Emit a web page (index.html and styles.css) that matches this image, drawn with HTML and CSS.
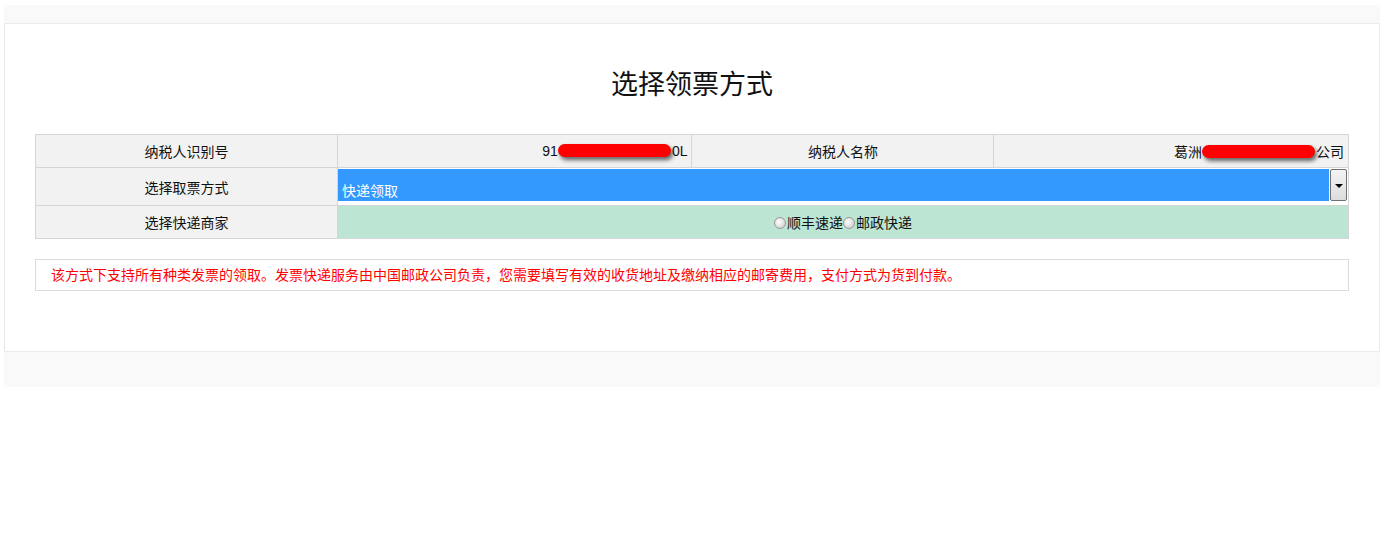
FILE: index.html
```html
<!DOCTYPE html>
<html>
<head>
	<meta charset="UTF-8">
	<title>选择领票方式</title>
	<link rel="stylesheet" href="styles.css">
</head>
<body>
	<div class="wrap">
		<div class="panel">
			<h2 class="title">选择领票方式</h2>
			<table class="info">
				<colgroup>
					<col class="c-lab"><col class="c-val"><col class="c-lab"><col class="c-val">
				</colgroup>
				<tr class="r1">
					<td class="lab">纳税人识别号</td>
					<td class="val">91<span class="mask"></span>0L</td>
					<td class="lab">纳税人名称</td>
					<td class="val">葛洲<span class="mask"></span>公司</td>
				</tr>
				<tr class="r2">
					<td class="lab">选择取票方式</td>
					<td colspan="3" class="selcell">
						<div class="sel">
							<div class="selval">快递领取</div>
							<div class="selbtn"><i></i></div>
						</div>
					</td>
				</tr>
				<tr class="r3">
					<td class="lab">选择快递商家</td>
					<td colspan="3" class="radios">
						<label><input type="radio" name="kd">顺丰速递</label><label><input type="radio" name="kd">邮政快递</label>
					</td>
				</tr>
			</table>
			<div class="notice">该方式下支持所有种类发票的领取。发票快递服务由中国邮政公司负责，您需要填写有效的收货地址及缴纳相应的邮寄费用，支付方式为货到付款。</div>
		</div>
	</div>
</body>
</html>
```

FILE: styles.css
```css
body {margin: 0;background: #fff;font-family: "Liberation Sans", "Noto Sans CJK SC", sans-serif;font-size: 14px;color: #111;}
.wrap {margin: 5px 12px 0 4px;background: #f9f9f9;padding: 18px 0 35px;}
.panel {background: #fff;border: 1px solid #ebebeb;border-left: 1px solid #e6e6e6;padding: 42px 30px 60px;}
.title {margin: 0 0 30px;text-align: center;font-weight: normal;font-size: 27px;line-height: 38px;color: #111;}
.info {width: 100%;border-collapse: collapse;table-layout: fixed;}
.info .c-lab {width: 23%;}
.info .c-val {width: 27%;}
.info td {border: 1px solid #d6d6d6;padding: 0 4px;}
.info .r1 td {height: 32px;}
.info .r2 td {height: 37px;}
.info .r3 td {height: 32px;}
.info td.lab {background: #f2f2f2;text-align: center;}
.info td.val {background: #f2f2f2;text-align: right;white-space: nowrap;}
.mask {display: inline-block;width: 113px;height: 13px;background: #f00;border-radius: 7px;vertical-align: -1px;box-shadow: 2px 3px 4px rgba(0,0,0,.6);margin-right: 1px;}
.info td.selcell {padding: 0;vertical-align: top;background: #fff;}
.sel {display: flex;height: 32px;padding-top: 1px;}
.selval {flex: 1;background: #3399ff;color: #fff;display: flex;align-items: flex-end;padding: 0 0 2px 4px;line-height: 16px;}
.selbtn {width: 15px;margin: 0 1px;border: 1px solid #707070;border-radius: 2px;background: linear-gradient(#f4f4f4, #dcdcdc);display: flex;align-items: center;justify-content: center;}
.selbtn i {width: 0;height: 0;border-left: 4px solid transparent;border-right: 4px solid transparent;border-top: 4px solid #000;margin-top: 1px;}
.info td.radios {background: #bce5d4;text-align: center;}
.radios input {appearance: none;-webkit-appearance: none;width: 12px;height: 12px;margin: 0 1px 0 0;border: 1px solid #999;border-radius: 50%;background: radial-gradient(circle at 40% 40%, #fff, #c4c4c4);vertical-align: -1px;}
.notice {margin-top: 20px;border: 1px solid #dcdcdc;height: 30px;line-height: 30px;padding-left: 15px;color: #f00;}
```
